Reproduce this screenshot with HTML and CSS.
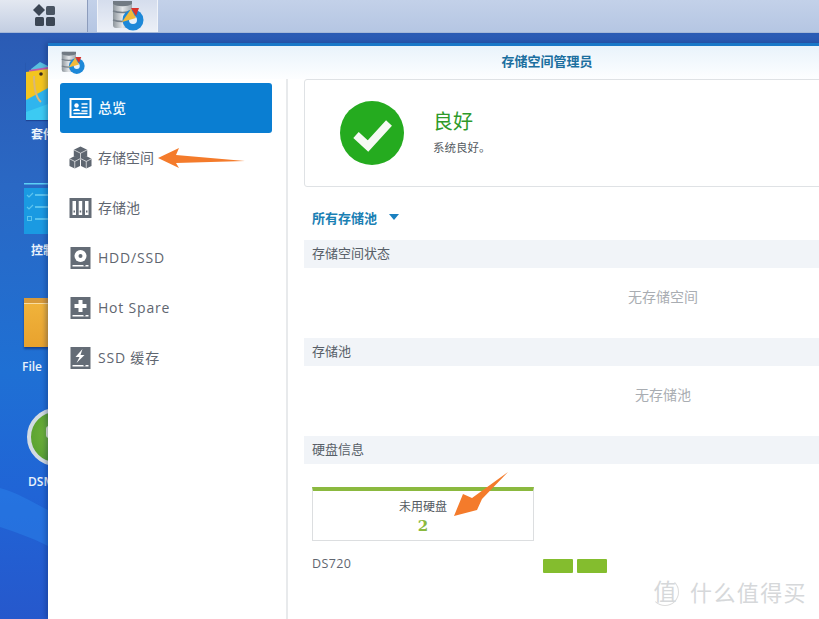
FILE: index.html
```html
<!DOCTYPE html>
<html lang="zh">
<head>
<meta charset="utf-8">
<title>存储空间管理员</title>
<link rel="stylesheet" href="styles.css">
</head>
<body>
<div class="desktop">
  <svg class="wave" viewBox="0 0 48 619" width="48" height="619"><path d="M0 488C16 492 32 502 48 510V546C32 538 16 532 0 527Z" fill="#2a82ea" opacity=".5"/></svg>
  <header class="taskbar">
    <div class="home-btn">
      <svg viewBox="0 0 24 24" width="24" height="24"><path d="M7 0l6 6-6 6-6-6z" fill="#3c4654"/><rect x="14" y="2" width="9" height="9" rx="1.500" fill="#4a5563"/><rect x="3" y="13" width="9" height="9" rx="1.500" fill="#3c4654"/><rect x="14" y="13" width="9" height="9" rx="1.500" fill="#3c4654"/></svg>
    </div>
    <div class="tab">
      <svg viewBox="0 0 32 32" width="32" height="32"><use href="#appicon"/></svg>
    </div>
  </header>

  <svg class="hidden-defs" width="0" height="0">
    <defs>
      <linearGradient id="stack" x1="0" x2="1" y1="0" y2="0"><stop offset="0" stop-color="#8d959c"/><stop offset=".5" stop-color="#e4e7ea"/><stop offset="1" stop-color="#a0a7ae"/></linearGradient>
      <g id="appicon">
        <rect x="1" y="1" width="19" height="27" rx="3" fill="url(#stack)"/>
        <path d="M1 4C5 7 16 7 20 4V1H1Z" fill="#717a83"/>
        <path d="M1 11c5 2 14 2 19 0M1 20c5 2 14 2 19 0" stroke="#77808a" stroke-width="1.500" fill="none"/>
        <circle cx="21" cy="20" r="10.500" fill="#1d88d8"/>
        <circle cx="21" cy="20" r="4" fill="#e6f1fa"/>
        <path d="M10 22L19 9L24 18Z" fill="#f2b93b"/>
        <path d="M19 8H27L24 16Z" fill="#d8332c"/>
      </g>
    </defs>
  </svg>

  <div class="desk-icon pkg">
    <svg viewBox="0 0 22 58" width="22" height="58"><path d="M5 7L14 0L22 4V12H5Z" fill="#58c0df"/><path d="M3 8L22 5V12H3Z" fill="#c05aa8"/><path d="M0 10L22 7V58H0Z" fill="#f3c51f"/><path d="M0 38L22 26V58H0Z" fill="#2fb5ee"/><path d="M0 50L22 42V58H0Z" fill="#3ccaf2"/><path d="M15 40C9 35 8 22 8 14" fill="none" stroke="#d8b77a" stroke-width="2"/><circle cx="15" cy="12" r="1.800" fill="#3a2a20"/></svg>
    <span class="desk-label">套件</span>
  </div>
  <div class="desk-icon ctl">
    <svg class="ctl-img" viewBox="0 0 30 51" width="30" height="51"><rect width="30" height="1.500" fill="#5cd0f5"/><rect y="5" width="30" height="46" fill="#1a9ae2"/><path d="M3 12l2 2 4-4M3 24l2 2 4-4" fill="none" stroke="#5cc4ee" stroke-width="1.200"/><rect x="3.500" y="33.500" width="4" height="4" fill="none" stroke="#5cc4ee"/><path d="M11 12h19M11 24h19M11 36h19" stroke="#6fd0f2" stroke-width="1.500"/></svg>
    <span class="desk-label">控制</span>
  </div>
  <div class="desk-icon file">
    <div class="folder"></div>
    <span class="desk-label">File</span>
  </div>
  <div class="desk-icon dsm">
    <div class="dsm-ring"><b></b></div>
    <span class="desk-label">DSM</span>
  </div>

  <section class="window">
    <div class="titlebar">
      <svg class="title-icon" viewBox="0 0 32 32" width="24" height="24"><use href="#appicon"/></svg>
      <h1 class="title">存储空间管理员</h1>
    </div>
    <div class="body">
      <nav class="sidebar">
        <a class="nav-item active">
          <svg class="nav-icon" viewBox="0 0 22 20" width="22" height="20"><rect x="1" y="1" width="20" height="18" fill="none" stroke="#fff" stroke-width="2"/><circle cx="7" cy="7.500" r="2.200" fill="#fff"/><path d="M3.500 13c0-3 7-3 7 0z" fill="#fff"/><path d="M12 6h6M12 9.500h6M12 13h6M4 15.500h14" stroke="#fff" stroke-width="1.500"/></svg>
          <span>总览</span>
        </a>
        <a class="nav-item">
          <svg class="nav-icon" viewBox="0 0 24 24" width="24" height="24"><path d="M12 0l7 3.500v6.500l-7 3.500-7-3.500V3.500z" fill="#5e6670"/><path d="M6 10l5.500 2.800v7.500L6 23 .5 20.300v-7.500z" fill="#5e6670"/><path d="M18 10l5.500 2.800v7.500L18 23l-5.500-2.700v-7.500z" fill="#5e6670"/><path d="M5 3.500l7 3.500 7-3.500M12 7v6M.5 12.800L6 15.600l5.500-2.800M6 15.600V23M12.500 12.800l5.500 2.800 5.500-2.800M18 15.600V23" fill="none" stroke="#fff" stroke-width=".7"/></svg>
          <span>存储空间</span>
        </a>
        <a class="nav-item">
          <svg class="nav-icon" viewBox="0 0 22 20" width="22" height="20"><rect width="22" height="20" fill="#646c76"/><path d="M3 3h3.500v14H3zM9.200 3h3.500v14H9.200zM15.500 3H19v14h-3.500z" fill="#fff"/><path d="M4 12.500h1.500v2H4zM10.200 12.500h1.500v2h-1.500zM16.500 12.500H18v2h-1.500z" fill="#646c76"/></svg>
          <span>存储池</span>
        </a>
        <a class="nav-item">
          <svg class="nav-icon" viewBox="0 0 20 22" width="20" height="22"><rect width="20" height="22" fill="#646c76"/><circle cx="10" cy="9" r="6" fill="#fff"/><circle cx="10" cy="9" r="2" fill="#646c76"/><rect x="2" y="18" width="16" height="1.500" fill="#fff"/><rect x="13" y="18" width="2" height="1.500" fill="#646c76"/></svg>
          <span class="latin">HDD/SSD</span>
        </a>
        <a class="nav-item">
          <svg class="nav-icon" viewBox="0 0 20 22" width="20" height="22"><rect width="20" height="22" fill="#646c76"/><path d="M8 3h4v4h4v4h-4v4H8v-4H4V7h4z" fill="#fff"/><rect x="2" y="18" width="16" height="1.500" fill="#fff"/><rect x="13" y="18" width="2" height="1.500" fill="#646c76"/></svg>
          <span class="latin">Hot Spare</span>
        </a>
        <a class="nav-item">
          <svg class="nav-icon" viewBox="0 0 20 22" width="20" height="22"><rect width="20" height="22" fill="#646c76"/><path d="M12 2L5 10h4l-3 6 8-8h-4z" fill="#fff"/><rect x="2" y="18" width="16" height="1.500" fill="#fff"/><rect x="13" y="18" width="2" height="1.500" fill="#646c76"/></svg>
          <span class="latin">SSD 缓存</span>
        </a>
      </nav>
      <main class="content">
        <div class="status-card">
          <svg class="status-icon" viewBox="0 0 64 64" width="64" height="64"><circle cx="32" cy="32" r="32" fill="#25ab1f"/><path d="M16 34l12 11 21-23" fill="none" stroke="#f6faf4" stroke-width="8"/></svg>
          <div class="status-text">
            <div class="status-title">良好</div>
            <div class="status-sub">系统良好。</div>
          </div>
        </div>
        <div class="filter">所有存储池<span class="caret"></span></div>
        <div class="section-head">存储空间状态</div>
        <div class="empty">无存储空间</div>
        <div class="section-head">存储池</div>
        <div class="empty">无存储池</div>
        <div class="section-head">硬盘信息</div>
        <div class="disk-tile">
          <div class="tile-label">未用硬盘</div>
          <div class="tile-num">2</div>
        </div>
        <div class="device">
          <span class="device-name">DS720</span>
          <div class="bays"><i></i><i></i></div>
        </div>
      </main>
    </div>
  </section>

  <svg class="arrow arrow-a" viewBox="0 0 90 34" width="90" height="34"><path d="M1 15L22 5L19 12L88 18L19 20L22 25Z" fill="#f47b2b"/></svg>
  <svg class="arrow arrow-b" viewBox="0 0 60 50" width="60" height="50"><path d="M55 2L29 29L24 40L1 46L10 24L19 28Z" fill="#f47b2b"/></svg>

  <div class="watermark">
    <span class="wm-badge">值</span>
    <span class="wm-text">什么值得买</span>
  </div>
</div>
</body>
</html>
```
FILE: styles.css
```css
* { box-sizing: border-box; }
html, body { margin: 0; padding: 0; }
body {
  width: 819px;
  height: 619px;
  overflow: hidden;
  font-family: "Open Sans", "Noto Sans CJK SC", sans-serif;
}
.desktop {
  position: relative;
  width: 819px;
  height: 619px;
  overflow: hidden;
  background: linear-gradient(180deg, #2b5bb4 5%, #2a68c4 30%, #1f70d4 60%, #2064d6 80%, #2658cc 100%);
}
.wave { position: absolute; left: 0; top: 0; }
.hidden-defs { position: absolute; }

.taskbar {
  display: flex;
  height: 33px;
  background: linear-gradient(180deg, #c3d1e9, #b5c6e3);
  border-bottom: 1px solid #a5b8d8;
}
.home-btn {
  width: 88px;
  display: flex;
  align-items: center;
  padding-left: 32px;
  background: linear-gradient(180deg, #e3e8f1, #c3cee2);
  border-right: 1px solid #8c9cbc;
}
.tab {
  margin-left: 9px;
  width: 61px;
  display: flex;
  align-items: flex-start;
  justify-content: center;
  background: linear-gradient(180deg, #d5dded, #ecf0f7);
  border-left: 1px solid #f1f4f9;
  border-right: 1px solid #f1f4f9;
}

.desk-icon { position: absolute; display: flex; flex-direction: column; }
.desk-label { color: #e9f2fb; font-size: 12px; line-height: 16px; font-weight: 600; white-space: nowrap; }
.pkg { left: 26px; top: 62px; width: 40px; }
.pkg svg { display: block; margin-bottom: 7px; box-shadow: 0 1px 1px rgba(0, 0, 60, .3); }
.pkg .desk-label { margin-left: 5px; }
.ctl { left: 24px; top: 183px; }
.ctl-img { display: block; margin-bottom: 9px; }
.ctl .desk-label { margin-left: 7px; }
.file { left: 24px; top: 298px; }
.folder {
  width: 30px;
  height: 49px;
  background: linear-gradient(180deg, #f0b33b, #e8a22e);
  border-top: 5px solid #d79a3a;
  box-shadow: inset 0 1px 0 #f8dca0, 0 2px 2px rgba(0, 0, 60, .4);
  margin-bottom: 12px;
}
.file .desk-label { margin-left: -2px; }
.dsm { left: 27px; top: 408px; }
.dsm-ring {
  position: relative;
  width: 58px;
  height: 58px;
  border-radius: 50%;
  background: radial-gradient(circle at 50% 45%, #78b83e, #4f9a2c);
  border: 4px solid #d3dbe2;
  margin-bottom: 8px;
}
.dsm-ring b { position: absolute; left: 15px; top: 14px; width: 6px; height: 12px; border-radius: 3px 0 0 3px; background: #e8edd8; }
.dsm .desk-label { margin-left: 1px; }

.window {
  position: absolute;
  left: 48px;
  top: 43px;
  width: 998px;
  height: 576px;
  background: #fff;
  border-top: 3px solid #1a78c8;
  box-shadow: -2px 0 5px rgba(10, 30, 80, .35);
}
.titlebar {
  position: relative;
  height: 33px;
  display: flex;
  align-items: flex-start;
  justify-content: center;
  background: linear-gradient(180deg, #e9f3fb, #fdfeff);
}
.title-icon { position: absolute; left: 13px; top: 5px; }
.title {
  margin: 0;
  font-size: 13px;
  font-weight: 700;
  color: #1b6f9f;
  line-height: 30px;
}
.body { display: flex; height: 540px; }
.sidebar {
  width: 240px;
  flex: none;
  padding: 4px 14px 0 12px;
  border-right: 2px solid #e8eaec;
  display: flex;
  flex-direction: column;
}
.nav-item {
  height: 50px;
  display: flex;
  align-items: center;
  padding-left: 9px;
  gap: 6px;
  font-size: 14px;
  color: #5f6670;
  border-radius: 3px;
}
.nav-item span { line-height: 20px; margin-top: -1px; }
.nav-item .latin { letter-spacing: .8px; }
.nav-item.active { background: #0a7ed2; color: #f1f9fd; font-weight: 500; }
.nav-icon { flex: none; width: 23px; }
.content { flex: 1; padding: 0 24px 0 16px; min-width: 0; }
.status-card {
  height: 108px;
  display: flex;
  align-items: center;
  padding-left: 35px;
  border: 1px solid #dfe2e5;
  border-radius: 3px;
}
.status-icon { flex: none; margin-top: -1px; }
.status-text { margin: -2px 0 0 29px; }
.status-title { font-size: 20px; line-height: 28px; color: #2e9a2a; }
.status-sub { font-size: 11.500px; line-height: 18px; color: #555b62; margin-top: 3px; }
.filter {
  display: flex;
  align-items: center;
  height: 26px;
  margin: 17px 0 10px;
  padding-left: 8px;
  font-size: 13px;
  font-weight: 700;
  color: #1a80b4;
}
.caret {
  width: 0;
  height: 0;
  margin: 0 0 0 12px;
  border: 5.500px solid transparent;
  border-bottom: 0;
  border-top: 6px solid #1a80c0;
}
.section-head {
  height: 28px;
  margin-top: 8px;
  padding-left: 8px;
  font-size: 13px;
  line-height: 26px;
  color: #585f68;
  background: #f1f4f8;
}
.empty { height: 62px; font-size: 14px; line-height: 58px; color: #a9adb2; text-align: center; }
.disk-tile {
  width: 222px;
  height: 54px;
  margin: 23px 0 0 8px;
  border: 1px solid #dcdee0;
  border-top: 4px solid #8bb93f;
  text-align: center;
}
.tile-label { font-size: 12px; line-height: 16px; margin-top: 8px; color: #555b62; }
.tile-num { font-family: "DejaVu Serif", "Liberation Serif", serif; font-weight: 700; font-size: 15px; line-height: 20px; margin-top: 1px; color: #8ab93e; }
.device {
  display: flex;
  align-items: flex-start;
  margin: 18px 0 0 8px;
  height: 14px;
}
.device-name { width: 231px; font-size: 12.500px; line-height: 10px; letter-spacing: .4px; color: #5f6670; }
.bays { display: flex; gap: 4px; }
.bays i { display: block; width: 30px; height: 14px; background: #84bd2e; border-radius: 1px; }

.arrow { position: absolute; }
.arrow-a { left: 157px; top: 143px; }
.arrow-b { left: 453px; top: 470px; }

.watermark {
  position: absolute;
  left: 651px;
  top: 577px;
  display: flex;
  align-items: center;
  gap: 11px;
  color: #d6d8da;
}
.wm-badge {
  width: 28px;
  height: 28px;
  border: 1px solid transparent;
  border-right-color: #dcdcdc;
  border-bottom-color: #dcdcdc;
  border-radius: 50%;
  font-size: 23px;
  line-height: 25px;
  text-align: center;
}
.wm-text { font-size: 22px; line-height: 30px; letter-spacing: 1.400px; white-space: nowrap; }
```
